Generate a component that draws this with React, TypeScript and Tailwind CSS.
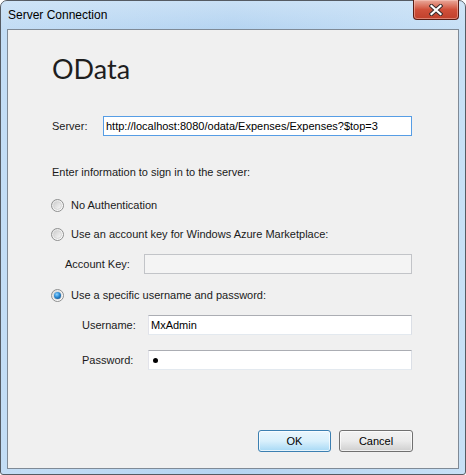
import React from 'react'

const font = { fontFamily: '"Liberation Sans", Arial, sans-serif' }
const headFont = { fontFamily: 'Lato, "Noto Sans", sans-serif' }

function Radio({ checked }: { checked?: boolean }) {
  return (
    <span className="relative w-[13px] h-[13px] rounded-full border border-[#8e8f8f] bg-gradient-to-br from-[#dcdcdc] via-[#f4f4f4] to-[#ffffff] flex items-center justify-center shrink-0">
      <span className="w-[9px] h-[9px] rounded-full border border-[#d5d5d5] bg-gradient-to-br from-[#cfcfcf] to-[#f7f7f7] flex items-center justify-center">
        {checked && (
          <span className="w-[7px] h-[7px] rounded-full bg-[radial-gradient(circle_at_40%_35%,#8ed3ff_0%,#2a8ad4_45%,#0d3c6e_100%)]" />
        )}
      </span>
    </span>
  )
}

function RadioRow({ label, checked, mt }: { label: string; checked?: boolean; mt: string }) {
  return (
    <div className={`flex items-center h-[20px] -ml-px gap-[7px] ${mt}`}>
      <Radio checked={checked} />
      <span>{label}</span>
    </div>
  )
}

function Field({ children, w, focused, disabled }: { children?: React.ReactNode; w: string; focused?: boolean; disabled?: boolean }) {
  const border = focused
    ? 'border-[#569de5]'
    : disabled
      ? 'border-[#c2c4c8] bg-[#f4f4f4]'
      : 'border-[#abadb3] border-l-[#e2e3ea] border-r-[#dbdfe6] border-b-[#e3e9ef]'
  return (
    <div className={`h-[20px] ${w} border ${border} ${disabled ? '' : 'bg-white'} flex items-center pl-[2px] text-black whitespace-nowrap overflow-hidden`}>
      {children}
    </div>
  )
}

function CloseButton() {
  return (
    <div className="w-[46px] h-[20px] rounded-b-[4px] border border-t-0 border-[#5a1d14] bg-gradient-to-b from-[#e9a99b] via-[#d0503a] to-[#c0402b] shadow-[inset_0_0_0_1px_rgba(255,210,200,0.45)] flex items-center justify-center">
      <svg width="14" height="12" viewBox="0 0 14 12">
        <path d="M2.5 2 L11.5 10 M11.5 2 L2.5 10" stroke="#3a2c2c" strokeWidth="4.2" strokeLinecap="square" />
        <path d="M2.5 2 L11.5 10 M11.5 2 L2.5 10" stroke="#ffffff" strokeWidth="2.2" strokeLinecap="square" />
      </svg>
    </div>
  )
}

export default function App() {
  return (
    <div className="w-[466px] h-[475px] bg-white" style={font}>
      <div className="w-[466px] h-[475px] rounded-t-[7px] rounded-b-[3px] border border-[#555b63] bg-gradient-to-r from-[#c3ddf5] via-[#b5d4f1] to-[#c7e0f6] flex flex-col">
        <div className="h-[28px] flex items-start justify-between bg-gradient-to-b from-[#d6e8f8]/60 to-transparent rounded-t-[6px]">
          <span className="text-[12px] leading-[16px] pl-[7px] pt-[6px] text-black">Server Connection</span>
          <div className="mr-[6px] -mt-px">
            <CloseButton />
          </div>
        </div>
        <div className="mx-[6px] h-[440px] border border-[#7f8a96] bg-[#f0f0f0] flex flex-col pl-[44px] pr-[45px] pb-[16px] text-[11px] text-[#1a1a1a]">
          <div className="mt-[25px] text-[27px] leading-[27px] text-[#1e1e1e]" style={headFont}>OData</div>

          <div className="mt-[34px] flex items-center h-[20px]">
            <span className="w-[51px]">Server:</span>
            <Field w="w-[309px]" focused>
              http://localhost:8080/odata/Expenses/Expenses?$top=3
            </Field>
          </div>

          <div className="mt-[26px] h-[20px] flex items-center">Enter information to sign in to the server:</div>

          <RadioRow label="No Authentication" mt="mt-[13px]" />
          <RadioRow label="Use an account key for Windows Azure Marketplace:" mt="mt-[9px]" />

          <div className="mt-[10px] flex items-center h-[20px] pl-[13px]">
            <span className="w-[79px]">Account Key:</span>
            <Field w="w-[268px]" disabled />
          </div>

          <RadioRow label="Use a specific username and password:" checked mt="mt-[11px]" />

          <div className="mt-[10px] flex items-center h-[20px] pl-[30px]">
            <span className="w-[66px]">Username:</span>
            <Field w="w-[264px]">MxAdmin</Field>
          </div>

          <div className="mt-[15px] flex items-center h-[20px] pl-[30px]">
            <span className="w-[66px]">Password:</span>
            <Field w="w-[264px]">
              <span className="ml-[2px] w-[5px] h-[5px] rounded-full bg-black" />
            </Field>
          </div>

          <div className="mt-auto flex justify-end gap-[8px]">
            <button className="w-[73px] h-[22px] rounded-[3px] border border-[#3c7fb1] bg-gradient-to-b from-[#eaf6fd] via-[#d9f0fc] to-[#a7d9f5] shadow-[inset_0_0_0_1px_rgba(255,255,255,0.7)] text-black text-[11px]">
              OK
            </button>
            <button className="w-[74px] h-[22px] rounded-[3px] border border-[#707070] bg-gradient-to-b from-[#f2f2f2] via-[#ebebeb] to-[#cfcfcf] shadow-[inset_0_0_0_1px_rgba(255,255,255,0.7)] text-black text-[11px]">
              Cancel
            </button>
          </div>
        </div>
      </div>
    </div>
  )
}
